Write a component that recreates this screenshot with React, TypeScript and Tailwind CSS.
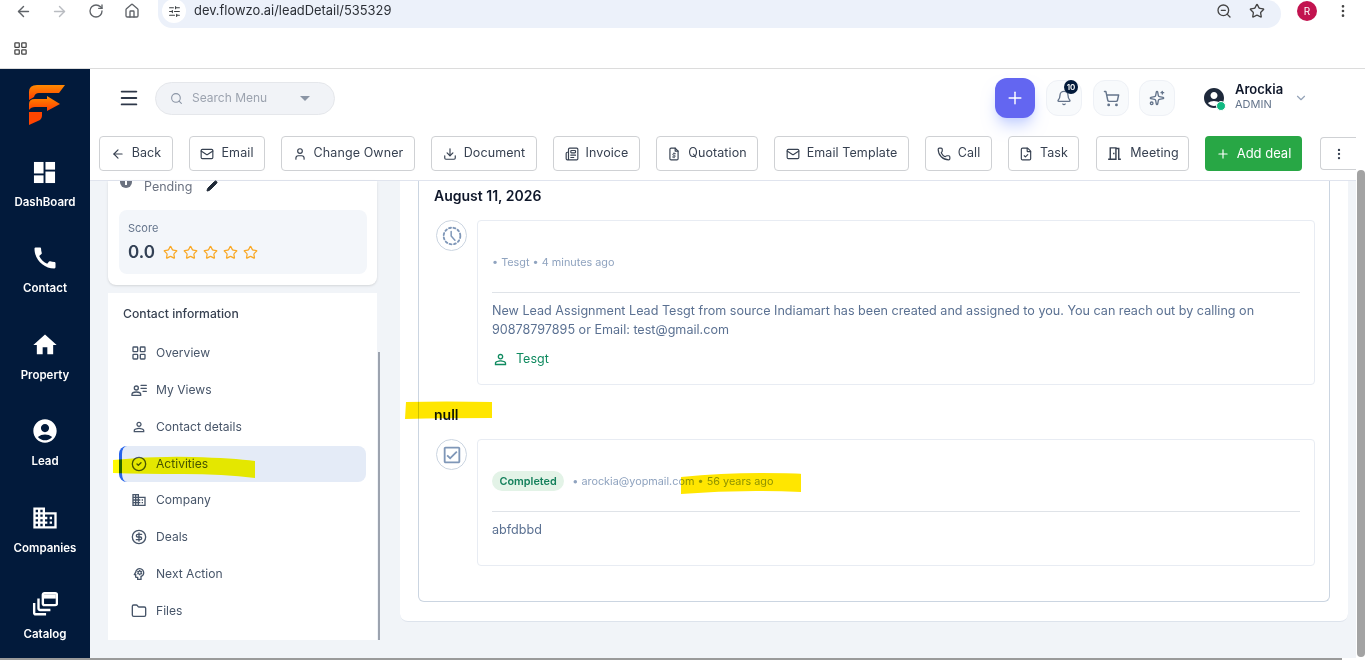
import React from 'react';
import {
  ArrowLeft, ArrowRight, RotateCw, Home, SlidersHorizontal, ZoomOut, Star, MoreVertical, LayoutGrid,
  Plus, Bell, ShoppingCart, Sparkles, ChevronDown, Menu, Search, Mail, User, Download, Newspaper,
  Phone, FileCheck, LayoutGrid as GridIcon, CircleCheck, CircleDollarSign, Folder, Pencil,
} from 'lucide-react';
import { MdCall, MdHome, MdAccountCircle, MdOutlineBusiness, MdOutlineDomain, MdPersonOutline, MdOutlinePsychology, MdOutlineCheckBox, MdOutlineMeetingRoom } from 'react-icons/md';

const DashIcon = ({ className }: { className?: string }) => (
  <svg className={className} viewBox="0 0 24 24" fill="currentColor">
    <rect x="1" y="1" width="10" height="12" />
    <rect x="13" y="1" width="10" height="8" />
    <rect x="1" y="15" width="10" height="8" />
    <rect x="13" y="11" width="10" height="12" />
  </svg>
);

const CatalogIcon = ({ className }: { className?: string }) => (
  <svg className={className} viewBox="0 0 24 24" fill="none" stroke="currentColor" strokeWidth="2.2">
    <rect x="10" y="2" width="13" height="11" rx="1.5" />
    <rect x="11" y="3" width="11" height="4" fill="currentColor" stroke="none" />
    <path d="M6 7v9a1.5 1.5 0 0 0 1.5 1.5H17" />
    <path d="M2 11v9a1.5 1.5 0 0 0 1.5 1.5H13" />
  </svg>
);

const QuoteIcon = ({ className }: { className?: string }) => (
  <svg className={className} viewBox="0 0 24 24" fill="none" stroke="currentColor" strokeWidth="2" strokeLinecap="round" strokeLinejoin="round">
    <path d="M14 2H7a2 2 0 0 0-2 2v16a2 2 0 0 0 2 2h10a2 2 0 0 0 2-2V7z" />
    <path d="M14 2v5h5" />
    <path d="M14.5 11.5h-3.2a1.4 1.4 0 0 0 0 2.8h1.4a1.4 1.4 0 0 1 0 2.8H9.5M12 10v1.5M12 17v1.5" strokeWidth="1.5" />
  </svg>
);

const ClockDashed = ({ className }: { className?: string }) => (
  <svg className={className} viewBox="0 0 24 24" fill="none" stroke="currentColor" strokeWidth="2.2" strokeLinecap="round">
    <circle cx="12" cy="12" r="10" strokeDasharray="2.4 3" />
    <path d="M11 6.5V12l4.5 5" strokeWidth="1.8" />
  </svg>
);

const ViewsIcon = ({ className }: { className?: string }) => (
  <svg className={className} viewBox="0 0 24 24" fill="none" stroke="currentColor" strokeWidth="2" strokeLinecap="round">
    <circle cx="8" cy="9" r="3" />
    <path d="M1.5 20v-1.5c0-2 3-3.5 6.5-3.5s6.5 1.500 6.500 3.500V20z" />
    <path d="M15 5h8M15 9.500h8M18 14h5" />
  </svg>
);

const sideItems = [
  { label: 'DashBoard', icon: DashIcon, size: 'w-[23px] h-[23px]' },
  { label: 'Contact', icon: MdCall, size: 'w-[28px] h-[28px]' },
  { label: 'Property', icon: MdHome, size: 'w-[28px] h-[28px]' },
  { label: 'Lead', icon: MdAccountCircle, size: 'w-[28px] h-[28px]' },
  { label: 'Companies', icon: MdOutlineBusiness, size: 'w-[28px] h-[28px]' },
  { label: 'Catalog', icon: CatalogIcon, size: 'w-[26px] h-[26px]' },
];

const actions = [
  { label: 'Back', icon: ArrowLeft, w: 'w-[74px]', size: 'w-[14px] h-[14px]' },
  { label: 'Email', icon: Mail, w: 'w-[76px]', size: 'w-[14px] h-[14px]' },
  { label: 'Change Owner', icon: User, w: 'w-[134px]', size: 'w-[14px] h-[14px]' },
  { label: 'Document', icon: Download, w: 'w-[106px]', size: 'w-[14px] h-[14px]' },
  { label: 'Invoice', icon: Newspaper, w: 'w-[87px]', size: 'w-[14px] h-[14px]' },
  { label: 'Quotation', icon: QuoteIcon, w: 'w-[102px]', size: 'w-[14px] h-[14px]' },
  { label: 'Email Template', icon: Mail, w: 'w-[135px]', size: 'w-[14px] h-[14px]' },
  { label: 'Call', icon: Phone, w: 'w-[67px]', size: 'w-[14px] h-[14px]' },
  { label: 'Task', icon: FileCheck, w: 'w-[71px]', size: 'w-[14px] h-[14px]' },
  { label: 'Meeting', icon: MdOutlineMeetingRoom, w: 'w-[93px] ml-[1px]', size: 'w-[17px] h-[17px]' },
];

const infoLinks = [
  { label: 'Overview', icon: GridIcon },
  { label: 'My Views', icon: ViewsIcon },
  { label: 'Contact details', icon: MdPersonOutline },
  { label: 'Activities', icon: CircleCheck, active: true },
  { label: 'Company', icon: MdOutlineDomain },
  { label: 'Deals', icon: CircleDollarSign },
  { label: 'Next Action', icon: MdOutlinePsychology },
  { label: 'Files', icon: Folder },
];

const Logo = () => (
  <svg className="ml-[4px] shrink-0" width="36" height="40" viewBox="0 0 36 40">
    <defs>
      <linearGradient id="f" x1="0" y1="0" x2="0" y2="1">
        <stop offset="0" stopColor="#ff8a00" />
        <stop offset="1" stopColor="#ff3d00" />
      </linearGradient>
    </defs>
    <path d="M0 15V7Q0 0 8 0H36L30 8H10Q6 8 5 12L0 15Z" fill="url(#f)" />
    <path d="M0 19Q0 14 6 14H18V11L31 19L18 26V22H6Q2 22 0 25Z" fill="url(#f)" />
    <path d="M0 27H13V31Q13 33 11 35L0 40Z" fill="#ff4500" />
  </svg>
);

const Chrome = () => (
  <div className="h-[69px] bg-white border-b border-[#dcdcdc] shrink-0">
    <div className="flex h-7">
      <div className="flex items-center h-[22px] text-[#5f6368]">
        <ArrowLeft className="w-[17px] h-[17px] ml-[15px]" />
        <ArrowRight className="w-[17px] h-[17px] ml-[19px] text-[#b9bcc1]" />
        <RotateCw className="w-[16px] h-[16px] ml-[20px]" />
        <Home className="w-[16px] h-[16px] ml-[20px]" />
      </div>
      <div className="ml-[18px] w-[1123px] h-7 bg-[#ecf1fa] rounded-r-full rounded-bl-full">
        <div className="flex items-center h-[22px]">
          <div className="w-6 h-6 ml-[4px] rounded-full bg-white flex items-center justify-center">
            <SlidersHorizontal className="w-[13px] h-[13px] text-[#3c4043]" />
          </div>
          <span className="ml-[8px] text-[12.9px] text-[#2b2f36]">dev.flowzo.ai/leadDetail/535329</span>
          <ZoomOut className="w-[16px] h-[16px] ml-auto mr-[17px] text-[#444]" />
          <Star className="w-[16px] h-[16px] mr-[16px] text-[#444]" />
        </div>
      </div>
      <div className="ml-[16px] mt-px w-5 h-5 rounded-full bg-[#c2134f] text-white text-[10px] flex items-center justify-center">R</div>
      <MoreVertical className="w-[16px] h-[16px] ml-[18px] mt-[3px] text-[#444]" />
    </div>
    <div className="h-[40px] flex items-center pl-[13px]">
      <LayoutGrid className="w-[15px] h-[15px] text-[#444]" />
    </div>
  </div>
);

const Sidebar = () => (
  <aside className="w-[90px] shrink-0 bg-[#021a3b] flex flex-col items-center pt-[16px] text-white">
    <Logo />
    <div className="mt-[33px] flex flex-col items-center gap-[34.4px]">
      {sideItems.map((s) => (
        <div key={s.label} className="flex flex-col items-center h-[52px]">
          <div className="h-[28px] flex items-center justify-center">
            <s.icon className={s.size} />
          </div>
          <span className="text-[11.5px] font-semibold mt-[8px] leading-[16px]">{s.label}</span>
        </div>
      ))}
    </div>
  </aside>
);

const Header = () => (
  <div className="bg-white border-b border-[#e0e4ee] h-[112px] shrink-0">
    <div className="h-[58px] flex items-center pl-[28px]">
      <Menu className="w-[22px] h-[22px] text-[#2d3748]" />
      <div className="ml-[15px] w-[180px] h-[33px] rounded-full bg-[#f1f3f7] border border-[#e5e7eb] flex items-center pl-[14px]">
        <Search className="w-[13px] h-[13px] text-[#8b95a5]" />
        <span className="ml-[9px] text-[12px] text-[#9ca3af]">Search Menu</span>
        <span className="ml-[33px] w-0 h-0 border-x-[5px] border-x-transparent border-t-[5px] border-t-[#8b95a5]" />
      </div>
      <button className="ml-auto w-10 h-10 rounded-xl bg-[#6366f1] shadow-lg shadow-indigo-200 flex items-center justify-center text-white">
        <Plus className="w-[20px] h-[20px]" strokeWidth={1.75} />
      </button>
      <div className="relative ml-[11px] w-9 h-9 rounded-xl bg-[#f8fafc] border border-[#eef1f6] flex items-center justify-center text-[#64748b]">
        <Bell className="w-[16px] h-[16px]" />
        <span className="absolute -top-[1px] right-[3px] w-[14px] h-[14px] rounded-full bg-[#021a3b] text-white text-[8px] font-semibold flex items-center justify-center">10</span>
      </div>
      <div className="ml-[11px] w-9 h-9 rounded-xl bg-[#f8fafc] border border-[#eef1f6] flex items-center justify-center text-[#64748b]">
        <ShoppingCart className="w-[17px] h-[17px]" />
      </div>
      <div className="ml-[10px] w-9 h-9 rounded-xl bg-[#f8fafc] border border-[#eef1f6] flex items-center justify-center text-[#64748b]">
        <Sparkles className="w-[16px] h-[16px]" />
      </div>
      <div className="relative ml-[29px] w-[20px] h-[20px] flex items-center justify-center">
        <MdAccountCircle className="w-[24px] h-[24px] text-[#1e293b] shrink-0" />
        <span className="absolute -right-[2px] -bottom-[3px] w-[10px] h-[10px] rounded-full bg-[#10b981] border border-white" />
      </div>
      <div className="ml-[11px] w-[51px] -mt-[4px]">
        <div className="text-[13px] font-semibold leading-[15px] text-[#0f172a]">Arockia</div>
        <div className="text-[11px] leading-[14px] text-[#64748b]">ADMIN</div>
      </div>
      <ChevronDown className="w-[14px] h-[14px] ml-[8px] mr-[48px] text-[#94a3b8]" />
    </div>
    <div className="flex items-center mt-[9px] pl-[9px] gap-4 overflow-hidden">
      {actions.map((a) => (
        <button key={a.label} className={`${a.w} shrink-0 h-[35px] rounded-[4px] bg-white border border-[#cfd1d4] flex items-center justify-center gap-[7px] text-[12.5px] tracking-[0.1px] text-[#374151]`}>
          <a.icon className={`${a.size} text-[#374151] shrink-0`} />
          {a.label}
        </button>
      ))}
      <button className="w-[97px] shrink-0 h-[35px] rounded-[4px] bg-[#28a745] text-white text-[13px] flex items-center justify-center gap-[7px]">
        <Plus className="w-[14px] h-[14px]" />
        Add deal
      </button>
      <button className="w-[36px] shrink-0 ml-[2px] h-[33px] rounded-l-[4px] bg-white border border-r-0 border-[#cfd1d4] flex items-center justify-center">
        <MoreVertical className="w-[14px] h-[14px] text-[#374151]" />
      </button>
    </div>
  </div>
);

const LeftColumn = () => (
  <div className="w-[269px] shrink-0 flex flex-col gap-[8px]">
    <div className="bg-white rounded-b-lg shadow-sm h-[104px] px-[11px]">
      <div className="flex h-[9px] pl-[1px] text-[12.5px] text-[#6b7280]">
        {/* info icon, its top half scrolled away under the header */}
        <svg className="shrink-0" width="12" height="7" viewBox="0 5 12 7">
          <circle cx="6" cy="6" r="6" fill="#6b7280" />
          <rect x="5" y="5" width="2" height="4" fill="#ffffff" />
        </svg>
        <span className="ml-[12px] leading-[9px] mt-[1px]">Pending</span>
        <Pencil className="w-[12px] h-[12px] ml-[14px] -mt-[1px] text-[#1f2937] fill-[#1f2937]" />
      </div>
      <div className="mt-[20px] h-[64px] w-[248px] bg-[#f3f6fa] rounded-lg pl-[9px] pt-[10px]">
        <div className="text-[11px] leading-[16px] text-[#64748b]">Score</div>
        <div className="flex items-center mt-[5px]">
          <span className="text-[17px] font-semibold leading-[22px] text-[#334155]">0.0</span>
          <div className="flex ml-[8px] gap-[5px]">
            {[0, 1, 2, 3, 4].map((i) => (
              <Star key={i} className="w-[15px] h-[15px] text-[#f9a825]" strokeWidth={2} />
            ))}
          </div>
        </div>
      </div>
    </div>
    <div className="relative bg-white h-[347px] pl-[11px]">
      <div className="pl-[4px] pt-[12px] text-[12.2px] font-medium leading-[17px] text-[#374151]">Contact information</div>
      <div className="mt-[13.6px] flex flex-col gap-[1px] w-[247px]">
        {infoLinks.map((l) => (
          <div
            key={l.label}
            className={`flex items-center h-[35.75px] rounded-lg text-[12.1px] text-[#475569] ${l.active ? 'bg-[#e4ebf7] border-l-[3px] border-[#2563eb] pl-[9px]' : 'pl-[12px]'}`}
          >
            <l.icon className="w-[16px] h-[16px] text-[#475569]" />
            <span className="ml-[9px]">{l.label}</span>
          </div>
        ))}
      </div>
      <div className="absolute right-[-3px] bottom-0 w-[2px] h-[288px] bg-[#9ca3af]" />
      {/* marker stroke over Activities */}
      <svg className="absolute left-[5px] top-[163px] mix-blend-multiply" width="143" height="23" viewBox="0 0 143 23">
        <path d="M0 4Q40 0 80 1T142 5V22Q110 18 70 18T0 17Z" fill="#fffb00" />
      </svg>
    </div>
  </div>
);

const Timeline = () => (
  <div className="flex-1 min-w-0 bg-white rounded-b-lg border-b border-[#dde3ec] h-[441px] px-[18px] pb-[19px]">
    <div className="relative h-full border border-t-0 border-[#cbd5e1] rounded-b-md pl-[15px] pr-[14px]">
      <div className="pt-[5px] text-[14px] font-semibold leading-[20px] text-[#0f172a]">August 11, 2026</div>
      <div className="flex mt-[14px]">
        <div className="w-[31px] h-[31px] rounded-full border border-[#cbd5e1] flex items-center justify-center shrink-0 ml-[2px]">
          <ClockDashed className="w-[20px] h-[20px] text-[#7f97b8]" />
        </div>
        <div className="ml-[10px] flex-1 h-[165px] rounded-[4px] border border-[#e8ecf3] px-[14px]">
          <div className="pt-[34px] text-[10.85px] leading-[14px] text-[#8fa3bf]">• Tesgt • 4 minutes ago</div>
          <div className="mt-[23px] border-t border-[#dfe3e8]" />
          <p className="mt-[8px] text-[12.6px] leading-[19px] text-[#5b7192]">
            New Lead Assignment Lead Tesgt from source Indiamart has been created and assigned to you. You can reach out by calling on 90878797895 or Email: test@gmail.com
          </p>
          <div className="mt-[11px] flex items-center text-[12.5px] text-[#0f8a5f]">
            <MdPersonOutline className="w-[17px] h-[17px]" />
            <span className="ml-[7px]">Tesgt</span>
          </div>
        </div>
      </div>
      <div className="pt-[20px] text-[14px] font-semibold leading-[20px] text-[#0f172a]">null</div>
      <div className="flex mt-[14px]">
        <div className="w-[31px] h-[31px] rounded-full border border-[#cbd5e1] flex items-center justify-center shrink-0 ml-[2px]">
          <MdOutlineCheckBox className="w-[22px] h-[22px] text-[#7f97b8]" />
        </div>
        <div className="ml-[10px] flex-1 h-[127px] rounded-[4px] border border-[#e8ecf3] px-[14px]">
          <div className="pt-[31px] flex items-center text-[10.85px] text-[#8fa3bf]">
            <span className="h-5 px-[7.5px] rounded-full bg-[#e3f3e7] text-[#15805c] font-semibold flex items-center">Completed</span>
            <span className="ml-2">• arockia@yopmail.com • 56 years ago</span>
          </div>
          <div className="mt-[20px] border-t border-[#dfe3e8]" />
          <p className="mt-[8px] text-[12.6px] leading-[19px] text-[#5b7192]">abfdbbd</p>
        </div>
      </div>
      {/* marker strokes */}
      <svg className="absolute left-[-14px] top-[220px] mix-blend-multiply" width="88" height="19" viewBox="0 0 88 19">
        <path d="M1 1Q40 0 87 1V17Q40 17 0 18Z" fill="#ffe600" />
      </svg>
      <svg className="absolute left-[262px] top-[292px] mix-blend-multiply" width="121" height="22" viewBox="0 0 121 22">
        <path d="M0 4Q40 0 80 0T120 1V19Q60 16 0 21Z" fill="#ffe600" />
      </svg>
    </div>
  </div>
);

export default function App() {
  return (
    <div className="h-[660px] w-[1365px] overflow-hidden flex flex-col bg-white font-['Inter',sans-serif]">
      <Chrome />
      <div className="flex h-[589px] shrink-0">
        <Sidebar />
        <main className="flex-1 min-w-0 flex flex-col bg-[#f1f4f8]">
          <Header />
          <div className="flex pl-[18px] pr-[8px] gap-[23px]">
            <LeftColumn />
            <Timeline />
          </div>
        </main>
        <div className="w-[9px] shrink-0 bg-white pl-px pt-[101px]">
          <div className="h-[487px] bg-[#a3a3a3] rounded-t-[4px] rounded-b-[4px]" />
        </div>
      </div>
      <div className="h-[2px] w-[1342px] bg-[#9a9a9a] shrink-0" />
    </div>
  );
}
